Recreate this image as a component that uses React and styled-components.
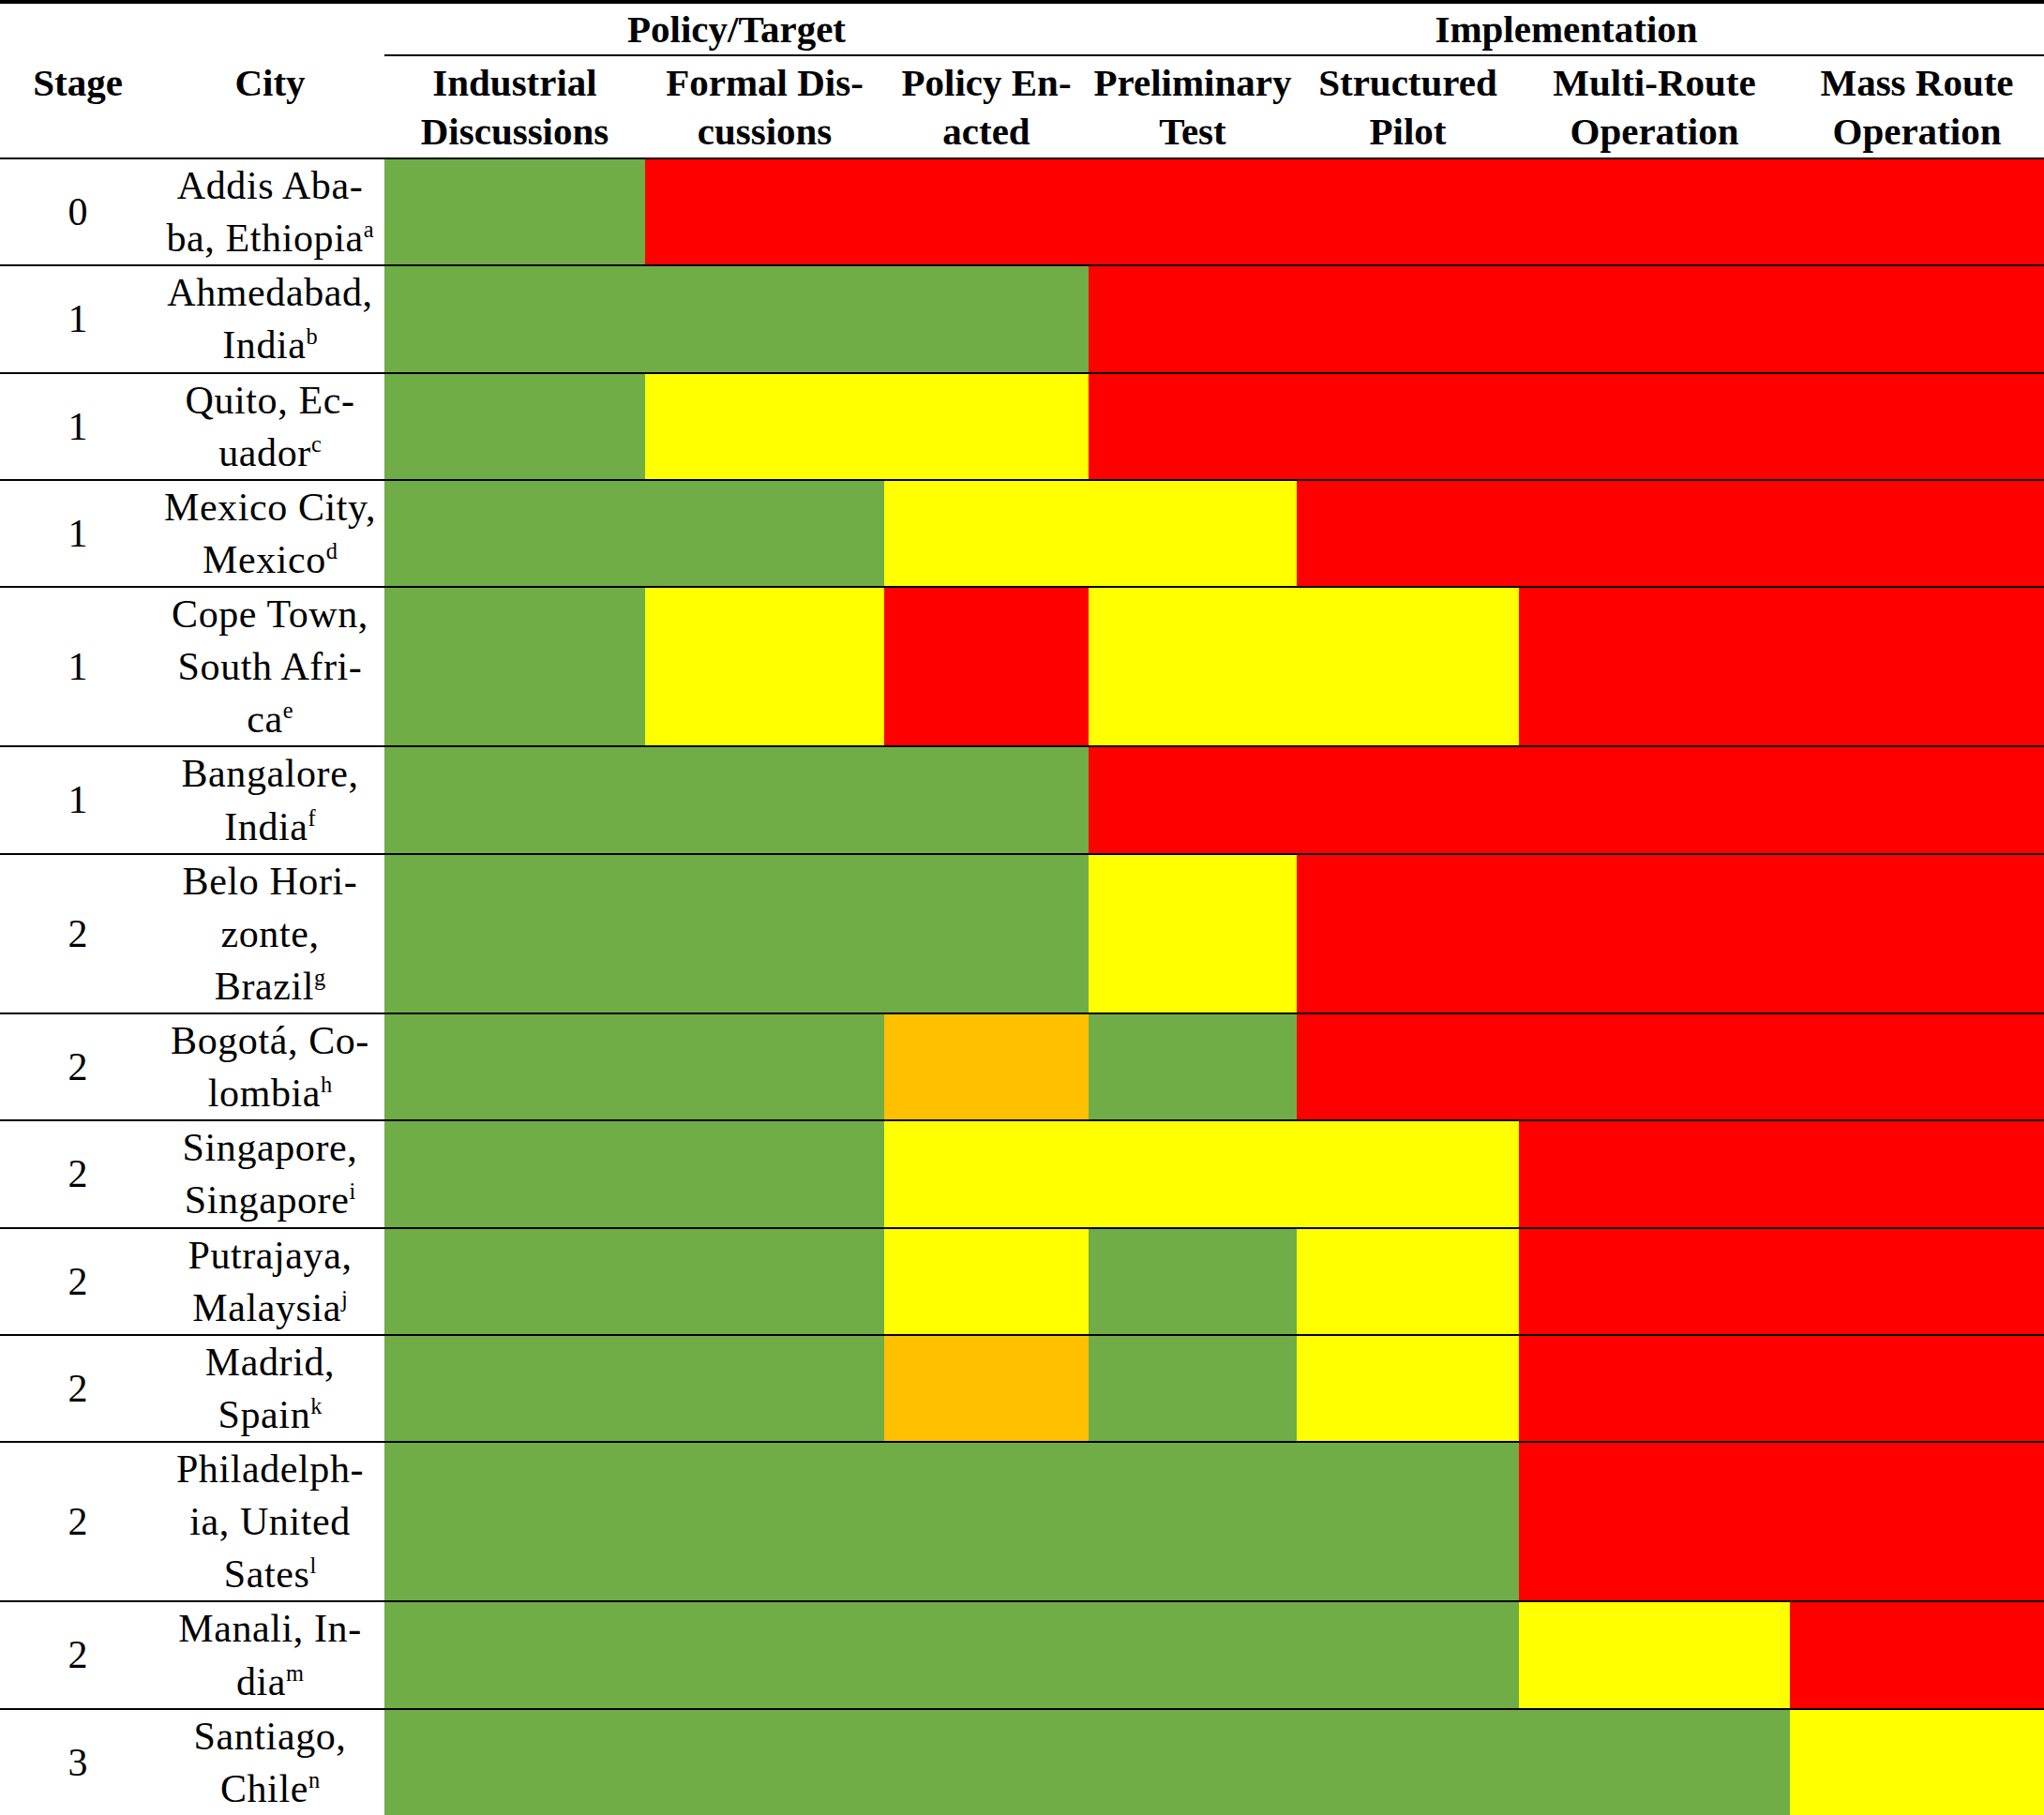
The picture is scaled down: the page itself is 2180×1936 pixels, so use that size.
import React from "react";
import styled, { createGlobalStyle } from "styled-components";

const GlobalStyle = createGlobalStyle`
  html, body {
    margin: 0;
    padding: 0;
    background: #ffffff;
  }
  body {
    font-family: "Liberation Serif", "Times New Roman", serif;
    color: #000;
  }
`;

const COLS = "166px 244px 278px 255px 218px 222px 237px 289px 271px";

const COLORS = {
  G: "#70ad47",
  R: "#ff0000",
  Y: "#ffff00",
  O: "#ffc000",
};

const Table = styled.div`
  width: 2180px;
  overflow: hidden;
`;

const Head = styled.div`
  display: grid;
  grid-template-columns: ${COLS};
  grid-template-rows: 56px 108px;
  border-top: 4px solid #000;
  font-weight: 700;
  font-size: 41px;
`;

const CornerCell = styled.div`
  grid-row: 1 / span 2;
  display: flex;
  align-items: center;
  justify-content: center;
  padding-top: 4px;
  white-space: nowrap;
`;

const SpanCell = styled.div`
  grid-column: span ${(p) => p.$span};
  border-bottom: 2px solid #000;
  display: flex;
  align-items: center;
  justify-content: center;
  white-space: nowrap;
  line-height: 1;
`;

const SubHead = styled.div`
  grid-row: 2;
  display: flex;
  flex-direction: column;
  align-items: center;
  justify-content: center;
  line-height: 52px;
  white-space: nowrap;
`;

const Row = styled.div`
  display: grid;
  grid-template-columns: ${COLS};
  border-top: 2px solid #000;
  font-size: 42px;
  line-height: 56.13px;
`;

const StageCell = styled.div`
  display: flex;
  align-items: center;
  justify-content: center;
`;

const CityCell = styled.div`
  display: flex;
  flex-direction: column;
  align-items: center;
  justify-content: center;
  white-space: nowrap;
  letter-spacing: 0.6px;
`;

const Sup = styled.span`
  font-size: 0.58em;
  vertical-align: 0.62em;
  line-height: 0;
  letter-spacing: 0;
`;

const ColorCell = styled.div`
  background: ${(p) => COLORS[p.$c]};
`;

const subHeads = [
  ["Industrial", "Discussions"],
  ["Formal Dis-", "cussions"],
  ["Policy En-", "acted"],
  ["Preliminary", "Test"],
  ["Structured", "Pilot"],
  ["Multi-Route", "Operation"],
  ["Mass Route", "Operation"],
];

const rows = [
  { stage: "0", city: ["Addis Aba-", "ba, Ethiopia"], note: "a", cells: "GRRRRRR" },
  { stage: "1", city: ["Ahmedabad,", "India"], note: "b", cells: "GGGRRRR" },
  { stage: "1", city: ["Quito, Ec-", "uador"], note: "c", cells: "GYYRRRR" },
  { stage: "1", city: ["Mexico City,", "Mexico"], note: "d", cells: "GGYYRRR" },
  { stage: "1", city: ["Cope Town,", "South Afri-", "ca"], note: "e", cells: "GYRYYRR" },
  { stage: "1", city: ["Bangalore,", "India"], note: "f", cells: "GGGRRRR" },
  { stage: "2", city: ["Belo Hori-", "zonte,", "Brazil"], note: "g", cells: "GGGYRRR" },
  { stage: "2", city: ["Bogotá, Co-", "lombia"], note: "h", cells: "GGOGRRR" },
  { stage: "2", city: ["Singapore,", "Singapore"], note: "i", cells: "GGYYYRR" },
  { stage: "2", city: ["Putrajaya,", "Malaysia"], note: "j", cells: "GGYGYRR" },
  { stage: "2", city: ["Madrid,", "Spain"], note: "k", cells: "GGOGYRR" },
  { stage: "2", city: ["Philadelph-", "ia, United", "Sates"], note: "l", cells: "GGGGGRR" },
  { stage: "2", city: ["Manali, In-", "dia"], note: "m", cells: "GGGGGYR" },
  { stage: "3", city: ["Santiago,", "Chile"], note: "n", cells: "GGGGGGY" },
];

const App = () => (
  <>
    <GlobalStyle />
    <Table>
      <Head>
        <CornerCell>Stage</CornerCell>
        <CornerCell>City</CornerCell>
        <SpanCell $span={3}>Policy/Target</SpanCell>
        <SpanCell $span={4}>Implementation</SpanCell>
        {subHeads.map((lines) => (
          <SubHead key={lines.join()}>
            {lines.map((l) => (
              <span key={l}>{l}</span>
            ))}
          </SubHead>
        ))}
      </Head>
      {rows.map((row) => (
        <Row key={row.note}>
          <StageCell>{row.stage}</StageCell>
          <CityCell>
            {row.city.map((line, i) => (
              <span key={i}>
                {line}
                {i === row.city.length - 1 && <Sup>{row.note}</Sup>}
              </span>
            ))}
          </CityCell>
          {row.cells.split("").map((c, i) => (
            <ColorCell key={i} $c={c} />
          ))}
        </Row>
      ))}
    </Table>
  </>
);

export default App;
